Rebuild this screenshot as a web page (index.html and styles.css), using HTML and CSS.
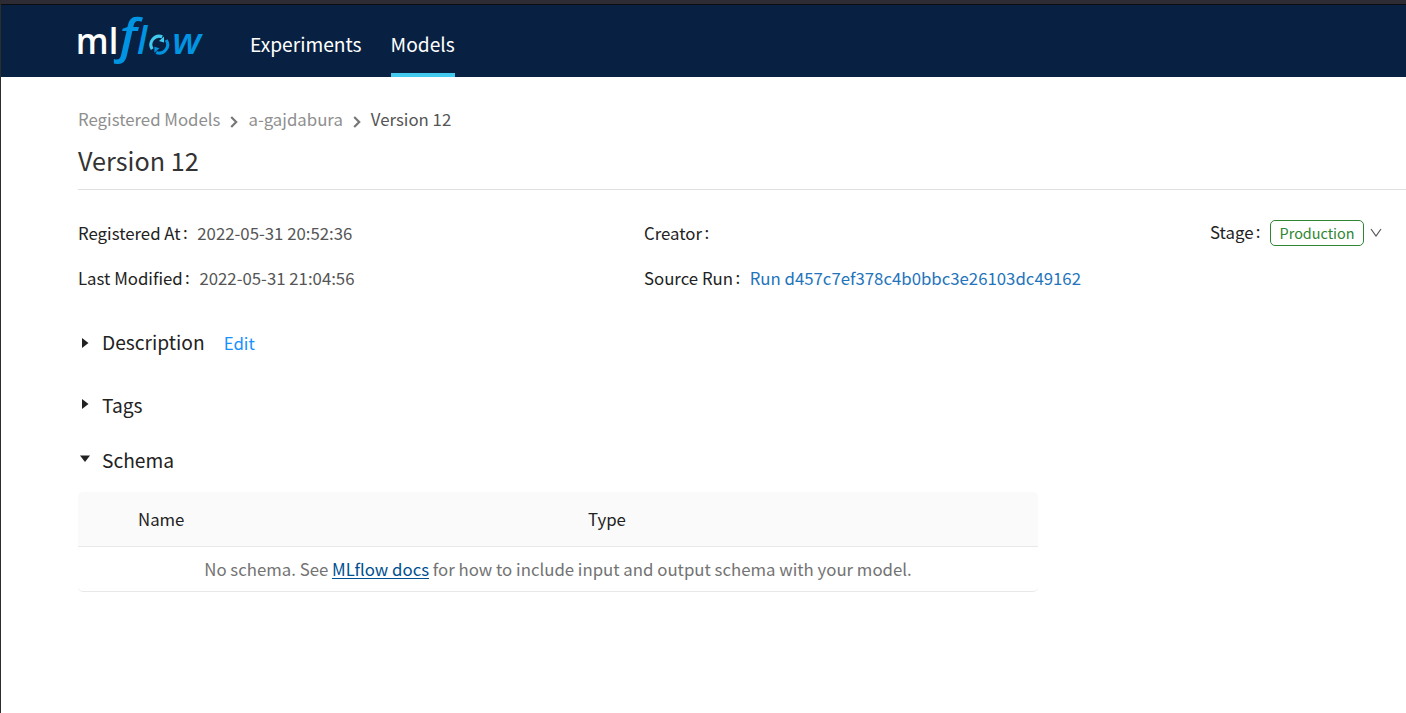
FILE: index.html
```html
<!DOCTYPE html>
<html lang="en">
<head>
<meta charset="utf-8">
<title>MLflow - Version 12</title>
<link rel="stylesheet" href="styles.css">
</head>
<body>
<div class="window">
  <header class="header">
    <svg class="logo" width="126" height="52" viewBox="0 0 126 52" role="img" aria-label="mlflow">
      <text class="logo-ml" x="-2.2" y="39.3" font-size="36" textLength="42.5" lengthAdjust="spacingAndGlyphs">ml</text>
      <text class="logo-flow" x="41.5" y="38" font-size="47" textLength="17.5" lengthAdjust="spacingAndGlyphs">f</text>
      <text class="logo-flow" x="59" y="39.3" font-size="37">l</text>
      <path class="ring-light" d="M74.2 34.2A8.4 8.4 0 0 1 84.2 21.8"/>
      <path class="tip-light" d="M86 21.5V27.5L81 26z"/>
      <path class="ring-dark" d="M88.2 25A8.4 8.4 0 0 1 78.2 37.5"/>
      <path class="tip-dark" d="M76.4 37.8V31.8L81.4 33.2z"/>
      <text class="logo-flow" x="94.2" y="39.3" font-size="36" textLength="29" lengthAdjust="spacingAndGlyphs">w</text>
    </svg>
    <nav class="nav">
      <a class="nav-link">Experiments</a>
      <a class="nav-link active">Models</a>
    </nav>
  </header>
  <main class="content">
    <div class="breadcrumb">
      <a>Registered Models</a>
      <svg class="crumb-arrow" width="8" height="12" viewBox="0 0 8 12"><path d="M1.2 1 6.2 6 1.2 11"/></svg>
      <a>a-gajdabura</a>
      <svg class="crumb-arrow" width="8" height="12" viewBox="0 0 8 12"><path d="M1.2 1 6.2 6 1.2 11"/></svg>
      <span class="current">Version 12</span>
    </div>
    <h1 class="title">Version 12</h1>
    <section class="details">
      <div class="detail"><span class="label">Registered At</span><span>2022-05-31 20:52:36</span></div>
      <div class="detail"><span class="label">Creator</span></div>
      <div class="detail stage"><span class="label">Stage</span><span class="tag">Production</span><svg class="chevron" width="12" height="10" viewBox="0 0 12 10"><path d="M1 1 6 8 11 1"/></svg></div>
      <div class="detail"><span class="label">Last Modified</span><span>2022-05-31 21:04:56</span></div>
      <div class="detail"><span class="label">Source Run</span><a class="run">Run d457c7ef378c4b0bbc3e26103dc49162</a></div>
    </section>
    <section class="panel description">
      <svg class="caret" width="12" height="12" viewBox="0 0 12 12"><path d="M4 1 10.5 6 4 11z"/></svg>
      <h2>Description</h2><a class="edit">Edit</a>
    </section>
    <section class="panel tags">
      <svg class="caret raised" width="12" height="12" viewBox="0 0 12 12"><path d="M4 1 10.5 6 4 11z"/></svg>
      <h2>Tags</h2>
    </section>
    <section class="panel">
      <svg class="caret raised" width="12" height="12" viewBox="0 0 12 12"><path d="M2 2.5H12L7 9z"/></svg>
      <h2>Schema</h2>
    </section>
    <div class="schema">
      <div class="schema-head"><span>Name</span><span>Type</span></div>
      <div class="schema-empty">No schema. See <a>MLflow docs</a> for how to include input and output schema with your model.</div>
    </div>
  </main>
</div>
</body>
</html>
```
FILE: styles.css
```css
* { box-sizing: border-box; }
body {
  margin: 0;
  background: #fff;
  font-family: "Noto Sans CJK SC", "Noto Sans", sans-serif;
  font-size: 16.8px;
  line-height: 24px;
  color: #222;
}
.window {
  height: 713px;
  border-top: 4px solid #2d2b33;
  border-left: 1px solid #2d2d2d;
  overflow: hidden;
}
.header {
  display: flex;
  height: 73px;
  padding-left: 77px;
  border-top: 1px solid #0b0c10;
  background: #082142;
}
.logo { flex: none; margin-top: 10px; overflow: visible; }
.logo text { font-family: "Open Sans", sans-serif; }
.logo-ml { fill: #fff; font-weight: 600; }
.logo-flow { fill: #0194e2; font-style: italic; font-weight: 600; }
.ring-light, .ring-dark { fill: none; stroke-width: 3.1; }
.ring-light { stroke: #43c9ed; }
.ring-dark { stroke: #0194e2; }
.tip-light { fill: #43c9ed; }
.tip-dark { fill: #0194e2; }
.nav { display: flex; gap: 29px; margin-left: 46px; }
.nav-link {
  padding-top: 25px;
  font-size: 19.2px;
  line-height: 28px;
  color: #fff;
}
.nav-link.active { border-bottom: 4px solid #43c9ed; }
.content { padding: 30px 0 0 77px; }
.breadcrumb { display: flex; align-items: flex-start; height: 26px; color: #8f8f8f; }
.crumb-arrow { margin: 9px 10px 0; fill: none; stroke: #777; stroke-width: 2.2; }
.breadcrumb .current { color: #555; }
.title {
  height: 57px;
  margin: 0;
  padding-top: 8px;
  border-bottom: 1px solid #e0e0e0;
  font-size: 25.2px;
  font-weight: 400;
  line-height: 39px;
  color: #333;
}
.details {
  display: grid;
  grid-template-columns: 566px 566px auto;
  row-gap: 19px;
  margin-top: 31px;
}
.detail { display: flex; height: 26px; color: #555; }
.label { color: #222; }
.label::after { content: ":"; position: relative; top: -1px; margin: 0 9.6px 0 2.4px; }
.stage { align-items: center; height: 24px; }
.stage .label { margin-top: -2px; }
.tag {
  height: 26px;
  padding: 0 8.5px;
  border: 1px solid #2e8533;
  border-radius: 5px;
  font-size: 14.4px;
  line-height: 23px;
  color: #2e8533;
}
.chevron { margin-left: 6px; fill: none; stroke: #555; stroke-width: 1.2; }
.run { color: #2374bb; }
.panel { display: flex; align-items: center; height: 30px; }
.panel h2 { margin: -2px 0 0 12px; font-size: 19.2px; font-weight: 400; line-height: 30px; color: #222; }
.caret { fill: #222; }
.caret.raised { margin-top: -4px; }
.description { margin: 36px 0 33px; }
.tags { margin-bottom: 25px; }
.edit { margin-left: 19px; color: #1890ff; }
.schema { width: 960px; height: 100px; margin-top: 16px; border-bottom: 1px solid #e8e8e8; border-radius: 5px; }
.schema-head {
  display: grid;
  grid-template-columns: 450px auto;
  height: 55px;
  padding: 15px 0 0 60px;
  border-bottom: 1px solid #e8e8e8;
  border-radius: 5px 5px 0 0;
  background: #fafafa;
}
.schema-empty { padding-top: 10px; text-align: center; color: #737373; }
.schema-empty a {
  color: #00508f;
  text-decoration: underline;
  text-decoration-thickness: 1px;
  text-underline-offset: 2px;
  text-decoration-skip-ink: none;
}
```
